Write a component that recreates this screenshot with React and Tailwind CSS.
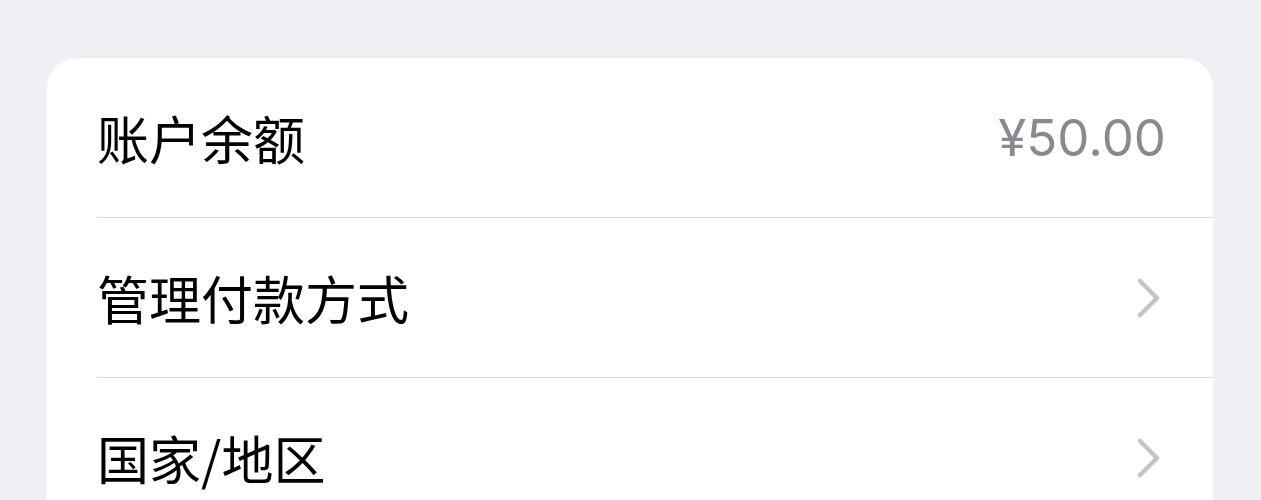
import React from "react";

const cjk = { fontFamily: '"Noto Sans CJK SC", "Noto Sans", sans-serif' };

function Chevron() {
  return (
    <svg width="24" height="40" viewBox="0 0 24 40" className="block">
      <polyline
        points="4,3 21,20 4,37"
        fill="none"
        stroke="#c4c4c7"
        strokeWidth="4.5"
        strokeLinecap="round"
        strokeLinejoin="round"
      />
    </svg>
  );
}

function Row({ label, right, last }) {
  return (
    <div className="pl-[50px]">
      <div
        className={
          "flex items-center justify-between h-[160px] pr-[50px] " +
          (last ? "" : "border-b border-[#d9d9dc]")
        }
      >
        <span className="text-[52px] leading-none text-black" style={cjk}>
          {label}
        </span>
        {right}
      </div>
    </div>
  );
}

export default function App() {
  return (
    <div className="w-[1261px] h-[500px] overflow-hidden bg-[#efeff4] pt-[58px] pl-[47px] pr-[48px]">
      <div className="bg-white rounded-[30px] overflow-hidden">
        <Row
          label="账户余额"
          right={
            <span
              className="text-[51px] leading-none text-[#8a8a8e] mr-[-3px]"
              style={{ fontFamily: 'Inter, "Liberation Sans", sans-serif' }}
            >
              ¥50.00
            </span>
          }
        />
        <Row
          label="管理付款方式"
          right={
            <div className="pr-[3px]">
              <Chevron />
            </div>
          }
        />
        <Row
          label="国家/地区"
          last
          right={
            <div className="pr-[3px]">
              <Chevron />
            </div>
          }
        />
      </div>
    </div>
  );
}
